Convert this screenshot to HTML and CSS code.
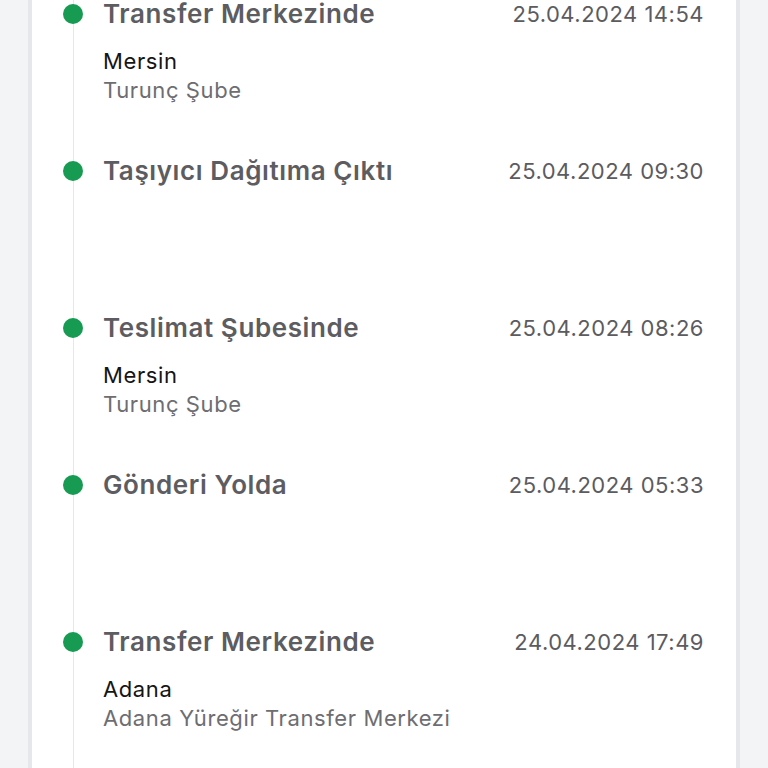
FILE: index.html
```html
<!DOCTYPE html>
<html lang="tr">
<head>
    <meta charset="UTF-8">
    <meta name="viewport" content="width=device-width, initial-scale=1.0">
    <title>Gönderi Hareketleri</title>
    <link rel="stylesheet" href="styles.css">
</head>
<body>
    <!-- Shipment history card -->
    <div class="card">
        <div class="timeline">
            <div class="event">
                <span class="dot"></span>
                <div class="title">Transfer Merkezinde</div>
                <div class="date">25.04.2024 14:54</div>
                <div class="details">
                    <div class="city">Mersin</div>
                    <div class="branch">Turunç Şube</div>
                </div>
            </div>

            <div class="event">
                <span class="dot"></span>
                <div class="title">Taşıyıcı Dağıtıma Çıktı</div>
                <div class="date">25.04.2024 09:30</div>
            </div>

            <div class="event">
                <span class="dot"></span>
                <div class="title">Teslimat Şubesinde</div>
                <div class="date">25.04.2024 08:26</div>
                <div class="details">
                    <div class="city">Mersin</div>
                    <div class="branch">Turunç Şube</div>
                </div>
            </div>

            <div class="event">
                <span class="dot"></span>
                <div class="title">Gönderi Yolda</div>
                <div class="date">25.04.2024 05:33</div>
            </div>

            <div class="event">
                <span class="dot"></span>
                <div class="title">Transfer Merkezinde</div>
                <div class="date">24.04.2024 17:49</div>
                <div class="details">
                    <div class="city">Adana</div>
                    <div class="branch">Adana Yüreğir Transfer Merkezi</div>
                </div>
            </div>
        </div>
    </div>
</body>
</html>
```

FILE: styles.css
```css
/* General */
body {
    margin: 0;
    background-color: #f3f4f6;
    font-family: Inter, "Noto Sans", sans-serif;
    overflow: hidden;
}
.card {
    margin: 0 28px;
    padding: 0 32px 40px 0;
    background-color: #fff;
    border-left: 4px solid #e6e7ea;
    border-right: 4px solid #e6e7ea;
}

/* Timeline */
.timeline {
    margin-left: 41px;
    border-left: 1px solid #e5e7eb;
}
.event {
    display: grid;
    grid-template-columns: 20px 1fr auto;
    column-gap: 20px;
    align-items: center;
    min-height: 157px;
    align-content: start;
    margin-left: -11px;
}
.dot {
    width: 20px;
    height: 20px;
    border-radius: 50%;
    background-color: #179a52;
}
.title {
    font-size: 26px;
    font-weight: 600;
    line-height: 28px;
    letter-spacing: 0.6px;
    color: #5c5c61;
}
.date {
    font-size: 22px;
    line-height: 28px;
    letter-spacing: 0.5px;
    color: #5b5b60;
}
.details {
    grid-column: 2 / 4;
    margin-top: 19px;
    font-size: 22px;
    line-height: 29px;
    letter-spacing: 0.6px;
}
.city {
    color: #151515;
}
.branch {
    color: #6d6d72;
}
```
